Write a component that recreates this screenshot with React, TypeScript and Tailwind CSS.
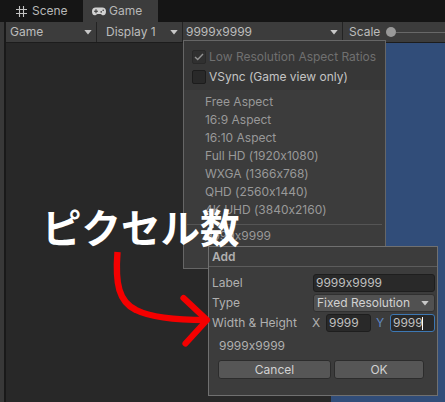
import type { ReactNode } from "react";
import clsx from "clsx";

const PRESETS = [
  "Free Aspect",
  "16:9 Aspect",
  "16:10 Aspect",
  "Full HD (1920x1080)",
  "WXGA (1366x768)",
  "QHD (2560x1440)",
  "4K UHD (3840x2160)",
];

function Caret() {
  return (
    <svg width="8" height="5" viewBox="0 0 8 5" className="shrink-0 fill-[#c8c8c8]">
      <path d="M0.3 0h7.4L4 4.6z" />
    </svg>
  );
}

function ToolbarSelect({ label, className }: { label: string; className?: string }) {
  return (
    <div className={clsx("flex shrink-0 items-center justify-between border-r border-[#232323]", className)}>
      <span>{label}</span>
      <Caret />
    </div>
  );
}

function Field({ className, children }: { className?: string; children: ReactNode }) {
  return (
    <div className={clsx("flex h-[18px] items-center rounded-[3px] border bg-[#292929]", className)}>
      {children}
    </div>
  );
}

function DialogButton({ className, children }: { className?: string; children: ReactNode }) {
  return (
    <button
      className={clsx(
        "flex h-[19px] items-center justify-center rounded-[3px] border border-[#2c2c2c] bg-[#565656] text-[#d2d2d2]",
        className
      )}
    >
      {children}
    </button>
  );
}

function TabBar() {
  return (
    <div className="flex h-[22px] shrink-0 bg-[#151515] text-[#b8b8b8]">
      <div className="flex w-[83px] items-center pl-4">
        <svg width="11" height="11" viewBox="0 0 11 11" className="mr-[5px] stroke-[#c4c4c4]" strokeWidth="1.1">
          <path d="M3.5 0v11M7.5 0v11M0 3.5h11M0 7.5h11" />
        </svg>
        <span>Scene</span>
      </div>
      <div className="flex w-[75px] items-center bg-[#3c3c3c] pl-[9px]">
        <svg width="14" height="9" viewBox="0 0 14 9" className="mt-px mr-[3px]">
          <path
            d="M3.8 0.5h6.4A3.8 3.8 0 0 1 14 4.3C14 6.8 13 8.3 11.4 8.3 10 8.3 9.4 7.4 8.4 7H5.6C4.6 7.4 4 8.3 2.6 8.3 1 8.3 0 6.8 0 4.3A3.8 3.8 0 0 1 3.8 0.5z"
            fill="#d2d2d2"
          />
          <path d="M4 2.2v4M2 4.2h4" stroke="#3c3c3c" strokeWidth="1.1" />
          <circle cx="9.2" cy="4.9" r="0.8" fill="#3c3c3c" />
          <circle cx="11.2" cy="3.3" r="0.8" fill="#3c3c3c" />
        </svg>
        <span>Game</span>
      </div>
    </div>
  );
}

function Toolbar() {
  return (
    <div className="flex h-5 shrink-0 bg-[#3c3c3c]">
      <ToolbarSelect label="Game" className="w-[91px] pr-[4px] pl-[4px]" />
      <ToolbarSelect label="Display 1" className="w-[86px] pr-[4px] pl-[9px]" />
      <ToolbarSelect label="9999x9999" className="w-[160px] pr-[4px] pl-[3px]" />
      <div className="flex grow items-center pl-[6px]">
        <span className="w-[31px]">Scale</span>
        <div className="ml-[6px] size-[10px] shrink-0 rounded-full bg-[#999999]" />
        <div className="h-px grow bg-[#686868]" />
      </div>
    </div>
  );
}

function AspectMenu() {
  return (
    <div className="absolute top-[40px] left-[183px] h-[229px] w-[203px] border border-[#666666] bg-[#3c3c3c] text-[#999999]">
      <div className="h-[49px] bg-[#373737] pt-[6px] pl-[8px]">
        <div className="flex h-5 items-center text-[#707070]">
          <span className="mr-[3px] flex size-[14px] items-center justify-center rounded-[2px] border border-[#292929] bg-[#303030]">
            <svg width="10" height="8" viewBox="0 0 10 8" fill="none" stroke="#929292" strokeWidth="1.4">
              <path d="M1 4l2.7 2.6L9 1" />
            </svg>
          </span>
          Low Resolution Aspect Ratios
        </div>
        <div className="flex h-5 items-center text-[#c4c4c4]">
          <span className="mr-[3px] size-[14px] rounded-[2px] border border-[#1c1c1c] bg-[#292929]" />
          VSync (Game view only)
        </div>
      </div>
      <ul className="pt-[3px] pl-[21px]">
        {PRESETS.map((preset) => (
          <li key={preset} className="h-[18px] leading-[18px]">
            {preset}
          </li>
        ))}
      </ul>
      <div className="mx-[3px] mt-[5px] h-px bg-[#555555]" />
      <div className="mt-[2px] pl-[21px] leading-[18px]">9999x9999</div>
    </div>
  );
}

function AddDialog() {
  return (
    <div className="absolute top-[246px] left-[208px] h-[150px] w-[230px] border border-[#707070] bg-[#3c3c3c] text-[#b0b0b0]">
      <div className="h-5 border-b border-[#5c5c5c] pl-[3px] leading-[20px] font-semibold">Add</div>
      <div className="mt-[6px] flex h-5 items-center pl-[3px]">
        <span className="w-[101px]">Label</span>
        <Field className="w-[122px] border-[#1e1e1e] pl-[2px] text-[#c0c0c0]">9999x9999</Field>
      </div>
      <div className="flex h-5 items-center pl-[3px]">
        <span className="w-[101px]">Type</span>
        <div className="flex h-[18px] w-[122px] items-center justify-between rounded-[3px] border border-[#303030] bg-[#515151] pr-[5px] pl-[3px] text-[#d2d2d2]">
          Fixed Resolution
          <Caret />
        </div>
      </div>
      <div className="flex h-5 items-center pl-[3px]">
        <span className="w-[100px]">Width &amp; Height</span>
        <span className="w-[14px]">X</span>
        <Field className="w-[45px] border-[#1e1e1e] pl-[2px] text-[#c0c0c0]">9999</Field>
        <span className="ml-[5px] w-[14px] text-[#5f88c4]">Y</span>
        <Field className="w-[45px] border-[#3d78b4] pl-[2px] text-[#c0c0c0]">
          9999
          <span className="-ml-px h-[13px] w-px bg-white" />
        </Field>
      </div>
      <div className="mt-[4px] pl-[10px] leading-[18px]">9999x9999</div>
      <div className="mt-[5px] flex gap-[3px] pl-[9px]">
        <DialogButton className="w-[113px]">Cancel</DialogButton>
        <DialogButton className="w-[90px]">OK</DialogButton>
      </div>
    </div>
  );
}

function Annotation() {
  return (
    <>
      <div className="absolute top-[199px] left-[42px] font-['Noto_Sans_CJK_JP',sans-serif] text-[39.5px] leading-[54px] font-bold tracking-normal whitespace-nowrap text-white">
        ピクセル数
      </div>
      <svg
        width="110"
        height="110"
        viewBox="0 0 110 110"
        fill="none"
        stroke="#f40000"
        strokeLinejoin="round"
        className="absolute top-[245px] left-[105px]"
      >
        <path d="M12.5 7C10 39 14 57 31 65C47 73 72 75 101 75" strokeWidth="6.4" />
        <path d="M78.5 53L102 75L80.5 98.5" strokeWidth="6.2" strokeLinecap="round" />
      </svg>
    </>
  );
}

export default function App() {
  return (
    // contextual alternates off, Inter turns the x between digits into a multiplication sign
    <div className="relative flex h-[402px] w-[445px] flex-col overflow-hidden bg-[#282828] font-[Inter,sans-serif] text-[12px] leading-[18px] tracking-[-0.01px] whitespace-nowrap text-[#bcbcbc] [font-feature-settings:'calt'_0]">
      <TabBar />
      <div className="flex grow">
        <div className="w-[4px] bg-[#383838]" />
        <div className="w-[2px] bg-[#191919]" />
        <div className="flex min-w-0 grow flex-col">
          <Toolbar />
          <div className="h-px bg-[#1c1c1c]" />
          <div className="flex grow justify-end">
            <div className="w-[114px] bg-[#314d79]" />
          </div>
        </div>
      </div>
      <AspectMenu />
      <AddDialog />
      <Annotation />
    </div>
  );
}
